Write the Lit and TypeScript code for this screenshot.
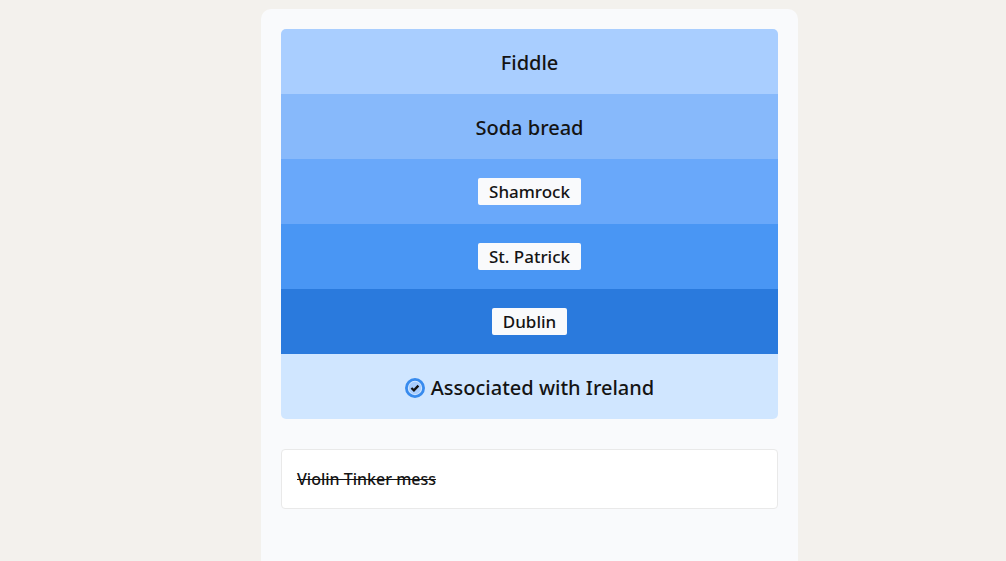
import { LitElement, html, css } from "lit";
import { customElement, state } from "lit/decorators.js";

type Row = { text: string; tone: string; chip: boolean };

@customElement("app-root")
export class AppRoot extends LitElement {
  static styles = css`
    :host {
      display: block;
      font-family: "Noto Sans", "Open Sans", sans-serif;
      color: #141414;
    }
    .page {
      box-sizing: border-box;
      min-height: 100vh;
      display: flex;
      justify-content: center;
      padding: 9px 0 0 53px;
      background: #f3f1ed;
    }
    .panel {
      box-sizing: border-box;
      width: 100%;
      max-width: 537px;
      padding: 20px;
      border-radius: 10px 10px 0 0;
      background: #f9fafc;
    }
    .stack {
      list-style: none;
      margin: 0 0 30px;
      padding: 0;
      border-radius: 5px;
      overflow: hidden;
    }
    .row {
      box-sizing: border-box;
      min-height: 65px;
      display: flex;
      align-items: center;
      justify-content: center;
      gap: 6px;
      padding: 3px 12px 0;
      font-size: 20px;
      line-height: 28px;
      font-weight: 500;
    }
    .tone-1 { background: #a9ceff; }
    .tone-2 { background: #87b9fb; }
    .tone-3 { background: #69a8fa; }
    .tone-4 { background: #4996f4; }
    .tone-5 { background: #2a7add; }
    .tone-6 { background: #d0e6ff; }
    .chipped {
      padding-top: 0;
    }
    .chip {
      padding: 1px 11px 0;
      border-radius: 2px;
      background: #f9fafc;
      font-size: 17px;
      line-height: 26px;
    }
    .check {
      flex: none;
      display: block;
    }
    .answer {
      box-sizing: border-box;
      padding: 15px;
      border: 1px solid #e9e9e9;
      border-radius: 4px;
      background: #ffffff;
      font-size: 16px;
      line-height: 28px;
      font-weight: 500;
    }
    .answer s {
      text-decoration-thickness: 1px;
    }
  `;

  @state() private rows: Row[] = [
    { text: "Fiddle", tone: "tone-1", chip: false },
    { text: "Soda bread", tone: "tone-2", chip: false },
    { text: "Shamrock", tone: "tone-3", chip: true },
    { text: "St. Patrick", tone: "tone-4", chip: true },
    { text: "Dublin", tone: "tone-5", chip: true },
  ];

  private renderRow(row: Row) {
    return row.chip
      ? html`<li class="row chipped ${row.tone}"><span class="chip">${row.text}</span></li>`
      : html`<li class="row ${row.tone}"><span>${row.text}</span></li>`;
  }

  render() {
    return html`
      <main class="page">
        <section class="panel">
          <ul class="stack">
            ${this.rows.map((row) => this.renderRow(row))}
            <li class="row tone-6">
              <svg class="check" width="20" height="20" viewBox="0 0 20 20" aria-hidden="true">
                <circle cx="10" cy="10" r="8.6" fill="#d0e6ff" stroke="#388bee" stroke-width="2.8" />
                <circle cx="10" cy="10" r="6.2" fill="#a9ceff" />
                <path d="M6.4 10 L8.9 12.3 L13.4 7.6" fill="none" stroke="#141414" stroke-width="2.3" />
              </svg>
              <span>Associated with Ireland</span>
            </li>
          </ul>
          <div class="answer"><s>Violin Tinker mess</s></div>
        </section>
      </main>
    `;
  }
}
